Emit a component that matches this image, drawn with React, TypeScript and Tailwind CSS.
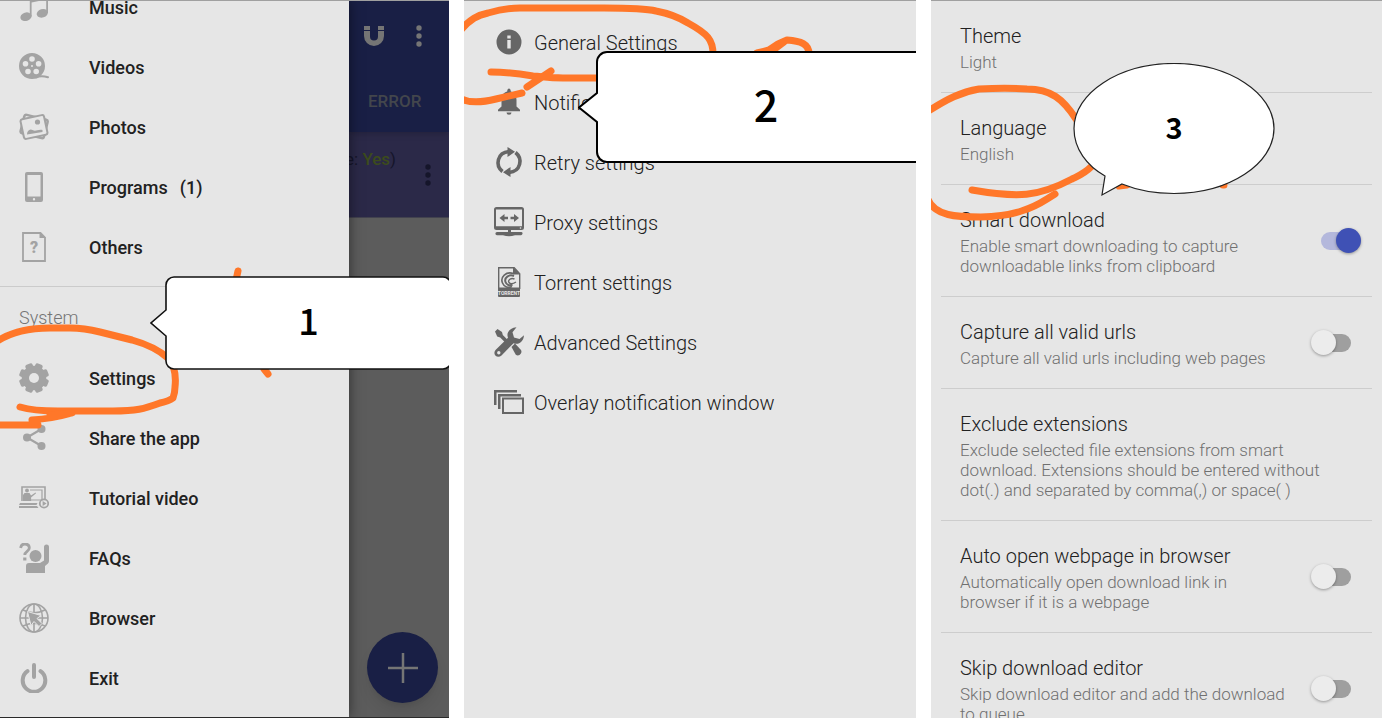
import { useState } from "react"
import type { ReactNode } from "react"

function Icon({ children }: { children: ReactNode }) {
  return (
    <svg viewBox="0 0 30 30" fill="currentColor" aria-hidden="true" className="size-[30px] shrink-0">
      {children}
    </svg>
  )
}

const MusicIcon = () => (
  <Icon>
    <path d="M10.800 3 29 0v21h-1.800V7.500L12.600 10.500v14h-1.800z" />
    <ellipse cx="7" cy="24.700" rx="5.700" ry="4.200" transform="rotate(-18 7 24.700)" />
    <ellipse cx="23.300" cy="21.300" rx="5.700" ry="4.200" transform="rotate(-18 23.300 21.300)" />
  </Icon>
)

const VideosIcon = () => (
  <Icon>
    <path
      fillRule="evenodd"
      d="M13 1a13 13 0 1 0 0 26 13 13 0 0 0 0-26zM13 4.200a2.800 2.800 0 1 1 0 5.600 2.800 2.800 0 0 1 0-5.600zM6.500 8.900a2.800 2.800 0 1 1 0 5.600 2.800 2.800 0 0 1 0-5.600zM19.600 8.900a2.800 2.800 0 1 1 0 5.600 2.800 2.800 0 0 1 0-5.600zM9 16.700a2.800 2.800 0 1 1 0 5.600 2.800 2.800 0 0 1 0-5.600zM17.200 16.700a2.800 2.800 0 1 1 0 5.600 2.800 2.800 0 0 1 0-5.600zM13 13a1 1 0 1 0 0 2 1 1 0 0 0 0-2z"
    />
    <path d="M17 25.500c4-2 8-1.500 12-.2" fill="none" stroke="currentColor" strokeWidth="2" strokeLinecap="round" />
  </Icon>
)

const PhotosIcon = () => (
  <Icon>
    <rect x="3" y="5" width="24" height="19" rx="2" transform="rotate(14 15 15)" fill="none" stroke="currentColor" strokeWidth="2.500" />
    <rect x="3" y="5" width="24" height="20" rx="2" transform="rotate(-12 15 15)" fill="#e6e6e6" stroke="currentColor" strokeWidth="2" />
    <circle cx="18.500" cy="10" r="2.600" />
    <path d="M8 22.500c0-4 3-6.500 6-4.200 3 1.500 5-1.300 9.500-.3v2z" />
  </Icon>
)

const ProgramsIcon = () => (
  <Icon>
    <path
      fillRule="evenodd"
      d="M8 0h14a2 2 0 0 1 2 2v26a2 2 0 0 1-2 2H8a2 2 0 0 1-2-2V2a2 2 0 0 1 2-2zM8.500 3v21.500h13V3zM15 26a1.200 1.200 0 1 0 0 2.400 1.200 1.200 0 0 0 0-2.400z"
    />
  </Icon>
)

const OthersIcon = () => (
  <Icon>
    <path d="M4 1h17.500l4.500 4.500V29H4z" fill="none" stroke="currentColor" strokeWidth="1.800" />
    <path d="M20.500 0v6H27z" />
    <text x="15" y="21" textAnchor="middle" fontSize="16" fontWeight="900" fontFamily="Roboto, sans-serif">
      ?
    </text>
  </Icon>
)

const SettingsIcon = () => (
  <Icon>
    {[22.5, 67.5, 112.5, 157.5].map((angle) => (
      <rect key={angle} x="11.200" y="0" width="7.600" height="30" rx="2" transform={`rotate(${angle} 15 15)`} />
    ))}
    <circle cx="15" cy="15" r="12.300" />
    <circle cx="15" cy="15" r="5" fill="#e6e6e6" />
  </Icon>
)

const ShareIcon = () => (
  <Icon>
    <path d="M22.500 6 8 14.500l14.500 8.500" fill="none" stroke="currentColor" strokeWidth="2.200" />
    <circle cx="22.500" cy="6" r="4" />
    <circle cx="8" cy="14.500" r="4" />
    <circle cx="22.500" cy="23" r="4" />
  </Icon>
)

const TutorialIcon = () => (
  <Icon>
    <path d="M3 18V4h23v13" fill="none" stroke="currentColor" strokeWidth="1.600" />
    <path d="M11 7h12v10H12" fill="none" stroke="currentColor" strokeWidth="1.200" />
    <circle cx="8" cy="7.500" r="1.900" />
    <path d="M4 18v-6l1.500-2h5l1.500 2.500 4.500-3 .6.700-5 4.300V18zM1 20h17.500l-1 2H0zM0 23h18l1.500 2H0z" />
    <circle cx="25" cy="20.500" r="4.200" fill="none" stroke="currentColor" strokeWidth="1.800" />
    <path d="M23.600 18v5l4-2.500z" />
  </Icon>
)

const FaqIcon = () => (
  <Icon>
    <circle cx="16.500" cy="13" r="6" />
    <path d="M7 30v-7a3 3 0 0 1 3-3h11l4-2.500V4a2.500 2.500 0 0 1 5 0v14c0 2-2 3.500-4 5V30z" />
    <path d="M1.700 5C2 2 4 1 5.800 1c3 0 4.500 1.800 4.500 4 0 3.500-4.500 3.300-4.500 7" fill="none" stroke="currentColor" strokeWidth="2.800" />
    <rect x="4.200" y="14.500" width="3.200" height="3" />
  </Icon>
)

const BrowserIcon = () => (
  <Icon>
    <g fill="none" stroke="currentColor" strokeWidth="1.600">
      <circle cx="15" cy="15" r="14" />
      <ellipse cx="15" cy="15" rx="8.500" ry="14" />
      <path d="M15 1v28M1 15h28M4 7c7 3.500 15 3.500 22 0M4 23c7-3.500 15-3.500 22 0" />
    </g>
    <path d="m8.500 8.500 3.500 14 3-4 5 5 3-3-5-5 4-3z" stroke="#e6e6e6" strokeWidth="1" />
  </Icon>
)

const ExitIcon = () => (
  <Icon>
    <g fill="none" stroke="currentColor" strokeWidth="4" strokeLinecap="round">
      <path d="M15 2v12M8.500 8.200a11.300 11.300 0 1 0 13 0" />
    </g>
  </Icon>
)

const InfoIcon = () => (
  <Icon>
    <path
      fillRule="evenodd"
      d="M15 2.500a12.500 12.500 0 1 0 0 25 12.500 12.500 0 0 0 0-25zM13.300 8.500h3.400v3h-3.400zM13.300 13h3.400v8.500h-3.400z"
    />
  </Icon>
)

const BellIcon = () => (
  <Icon>
    <path d="M13.200 4.500c0-4 3.600-4 3.600 0 4 1 5.700 4.500 5.700 8.500v6.500l3.500 3.300v1.400H4v-1.400l3.500-3.300V13c0-4 1.700-7.500 5.700-8.500zM12.500 25.500h5a2.500 2.200 0 0 1-5 0z" />
  </Icon>
)

const RetryIcon = () => (
  <Icon>
    <g fill="none" stroke="currentColor" strokeWidth="3.600">
      <path d="M8.500 24.500C1 18.500 3 5.500 15 4.500" />
      <path d="M21.500 5.500C29 11.500 27 24.500 15 25.500" />
    </g>
    <path d="M13.500 0 21 4.800 13.500 10zM16.500 20 9 25.200l7.500 4.800z" />
  </Icon>
)

const ProxyIcon = () => (
  <Icon>
    <path
      fillRule="evenodd"
      d="M2.500 0h25A2.500 2.500 0 0 1 30 2.500v18a2.500 2.500 0 0 1-2.500 2.500H17v2h10a1.500 1.500 0 0 1 1.500 1.800 2 2 0 0 1-1.500 1.400h-6c-4 1.500-8 1.500-12 0H3a1.500 1.500 0 0 1 0-3.200h11v-2H2.500A2.500 2.500 0 0 1 0 20.500v-18A2.500 2.500 0 0 1 2.500 0zM2 2.500v16.800h26V2.500z"
    />
    <path d="m5.500 11 5-4v2.700H14v2.600h-3.500V15zM25 11l-5-4v2.700h-3.500v2.600H20V15z" />
    <circle cx="26.500" cy="21" r=".8" fill="#e6e6e6" />
  </Icon>
)

const TorrentIcon = () => (
  <Icon>
    <path d="M4.700 22V.700h15.500l5.500 6V22" fill="none" stroke="currentColor" strokeWidth="1.400" />
    <path d="M19 0v7.500h7zM4 20.500h22V29a1 1 0 0 1-1 1H5a1 1 0 0 1-1-1z" />
    <g fill="none" stroke="currentColor">
      <path d="M19.500 6.500C12 4 6 10 8.500 16c1.500 4 6 5.500 9.500 3.500" strokeWidth="1.600" />
      <path d="M20 9c-5-2-10 1.500-8.500 6 1 3 4 4 7 2.500" strokeWidth="2" />
      <path d="M20.500 12c-3.500-1.500-7 1-5.500 3.500 1 1.500 4 1.500 7-.5" strokeWidth="1.400" />
    </g>
    <text x="15" y="27.500" textAnchor="middle" fontSize="5" fontWeight="700" fill="#e6e6e6" fontFamily="Roboto, sans-serif">
      TORRENT
    </text>
  </Icon>
)

const ToolsIcon = () => (
  <Icon>
    <path d="M1 4.500 3.500 2 8 5l.8 3 6 6-2.600 2.600-6-6-3-1z" />
    <path d="m17.500 20 3.500-3.500 6 6.500c1.800 3-2 7-5.200 4.800z" />
    <path
      fillRule="evenodd"
      d="M22.500.3c-7 .5-10.500 5.700-8.500 10.500L1.500 23c-3.500 4.500 2 9 6 5.500l12-12.300c5 2 10-1.200 10.500-8l-4.500 3.800-5.500-1.500-1.500-5.200zM4.800 24a1.700 1.700 0 1 1 0 3.400 1.700 1.700 0 0 1 0-3.400z"
    />
  </Icon>
)

const OverlayIcon = () => (
  <Icon>
    <path d="M0 3h23v2.500H2.500V18H0zM4 7h23v2.500H6.500V22H4z" />
    <rect x="9" y="11.500" width="20" height="14.500" fill="none" stroke="currentColor" strokeWidth="2" />
  </Icon>
)

const MagnetIcon = () => (
  <svg viewBox="0 0 20 20" fill="currentColor" aria-hidden="true" className="size-5">
    <path d="M0 0h6v4H0zM14 0h6v4h-6zM0 5h6v5.500a4 4 0 0 0 8 0V5h6v5a10 10 0 0 1-20 0z" />
  </svg>
)

const DotsIcon = () => (
  <svg viewBox="0 0 6 22" fill="currentColor" aria-hidden="true" className="h-[22px] w-[6px]">
    <circle cx="3" cy="3" r="2.700" />
    <circle cx="3" cy="11" r="2.700" />
    <circle cx="3" cy="19" r="2.700" />
  </svg>
)

const categories = [
  { label: "Music", icon: MusicIcon },
  { label: "Videos", icon: VideosIcon },
  { label: "Photos", icon: PhotosIcon },
  { label: "Programs", icon: ProgramsIcon, count: 1 },
  { label: "Others", icon: OthersIcon },
]

const systemItems = [
  { label: "Settings", icon: SettingsIcon },
  { label: "Share the app", icon: ShareIcon },
  { label: "Tutorial video", icon: TutorialIcon },
  { label: "FAQs", icon: FaqIcon },
  { label: "Browser", icon: BrowserIcon },
  { label: "Exit", icon: ExitIcon },
]

const settingsItems = [
  { label: "General Settings", icon: InfoIcon },
  { label: "Notification", icon: BellIcon },
  { label: "Retry settings", icon: RetryIcon },
  { label: "Proxy settings", icon: ProxyIcon },
  { label: "Torrent settings", icon: TorrentIcon },
  { label: "Advanced Settings", icon: ToolsIcon },
  { label: "Overlay notification window", icon: OverlayIcon },
]

const options = [
  { id: "theme", title: "Theme", text: "Light" },
  { id: "language", title: "Language", text: "English" },
  { id: "smart", title: "Smart download", text: "Enable smart downloading to capture downloadable links from clipboard", toggle: true },
  { id: "capture", title: "Capture all valid urls", text: "Capture all valid urls including web pages", toggle: true },
  {
    id: "exclude",
    title: "Exclude extensions",
    text: "Exclude selected file extensions from smart download. Extensions should be entered without dot(.) and separated by comma(,) or space( )",
  },
  { id: "auto", title: "Auto open webpage in browser", text: "Automatically open download link in browser if it is a webpage", toggle: true },
  { id: "skip", title: "Skip download editor", text: "Skip download editor and add the download to queue", toggle: true },
]

type DrawerItemProps = { label: string; icon: () => ReactNode; count?: number }

function DrawerItem({ label, icon: ItemIcon, count }: DrawerItemProps) {
  return (
    <button type="button" className="flex h-[60px] w-full items-center gap-10 px-[19px] text-left text-[18px] font-medium text-[#212121]">
      <span className="text-[#a3a3a3]">
        <ItemIcon />
      </span>
      <span className="flex gap-3">
        {label}
        {count && <span>({count})</span>}
      </span>
    </button>
  )
}

// Hand-drawn marker strokes over a screen
function Marker({ children }: { children: ReactNode }) {
  return (
    <svg
      viewBox="0 0 452 440"
      fill="none"
      stroke="#ff7729"
      strokeWidth="7"
      strokeLinecap="round"
      strokeLinejoin="round"
      aria-hidden="true"
      className="pointer-events-none absolute top-0 left-0 h-[440px] w-[452px]"
    >
      {children}
    </svg>
  )
}

function DrawerScreen() {
  return (
    <section className="relative flex overflow-hidden border-t border-b border-t-[#a0a0a0] border-b-[#2a2a2a] bg-[#5c5c5c]">
      <nav className="z-10 w-[349px] shrink-0 bg-[#e6e6e6] shadow-[0_0_12px_rgba(0,0,0,0.5)]">
        <div className="-mt-6 border-b border-[#cbcbcb] pb-[9px]">
          {categories.map((item) => (
            <DrawerItem key={item.label} {...item} />
          ))}
        </div>
        <h2 className="flex h-[61px] items-center px-[19px] text-[18px] font-light text-[#757575]">System</h2>
        {systemItems.map((item) => (
          <DrawerItem key={item.label} {...item} />
        ))}
      </nav>

      <div className="min-w-0 flex-1">
        <header className="relative h-[131px] bg-[#191f45] shadow-md">
          <div className="flex h-[70px] items-center justify-between pr-[27px] pl-[15px] text-[#757575]">
            <button type="button" aria-label="Magnet">
              <MagnetIcon />
            </button>
            <button type="button" aria-label="More">
              <DotsIcon />
            </button>
          </div>
          <button type="button" className="flex h-[61px] items-center pl-[19px] text-[17px] font-medium text-[#43464c]">
            ERROR
          </button>
        </header>
        <div className="flex h-[86px] justify-end gap-[29px] border-b border-[#42424e] bg-[#2b2948] pr-[18px] text-[#15152a]">
          <p className="pt-[15px] text-[17px] whitespace-nowrap">
            e: <span className="font-medium text-[#3c4b1c]">Yes</span>)
          </p>
          <button type="button" aria-label="Item menu">
            <DotsIcon />
          </button>
        </div>
      </div>

      <button
        type="button"
        aria-label="Add"
        className="absolute right-[11px] bottom-[14px] flex size-[71px] items-center justify-center rounded-full bg-[#191f45] text-[#757575] shadow-lg"
      >
        <svg viewBox="0 0 30 30" stroke="currentColor" strokeWidth="2.500" aria-hidden="true" className="size-[30px]">
          <path d="M15 0v30M0 15h30" />
        </svg>
      </button>

      <div className="pointer-events-none absolute inset-0 z-20">
        <Marker>
          <path d="M-4 341C12 330 30 327 50 327h20c12 0 22 2 30 4l32 8c18 5 28 11 36 18 8 9 8 20 7 29 0 5-1 8-2 11-4 3-8 4-13 5-16 6-24 8-47 8H58c-18 0-28-1-38-4" />
          <path d="M-4 424h42M32 419c14-1 26-3 40-7l-22 2M238 270l-2 9M264 368l4 5" />
        </Marker>
        <div className="absolute top-[275px] left-[150px] flex h-[94px] w-[301px] items-center justify-center pb-2 pl-4">
          <svg viewBox="0 0 301 94" aria-hidden="true" className="absolute inset-0">
            <path
              d="M24 1h269a8 8 0 0 1 8 8v76a8 8 0 0 1-8 8H24a8 8 0 0 1-8-8V60L1 47l15-13V9a8 8 0 0 1 8-8z"
              fill="#fff"
              stroke="#111"
              strokeWidth="1.600"
            />
          </svg>
          <span className="relative font-['Noto_Sans_CJK_JP',sans-serif] text-[36px] leading-none font-medium text-black">1</span>
        </div>
      </div>
    </section>
  )
}

function SettingsScreen() {
  return (
    <section className="relative overflow-hidden border-t border-[#a0a0a0] bg-[#e6e6e6]">
      <nav className="pt-[11px]">
        {settingsItems.map(({ label, icon: ItemIcon }) => (
          <button
            key={label}
            type="button"
            className="flex h-[60px] w-full items-center gap-[10px] pl-[30px] text-left text-[20px] font-light text-[#212121]"
          >
            <span className="text-[#666]">
              <ItemIcon />
            </span>
            <span className="pt-0.5">{label}</span>
          </button>
        ))}
      </nav>

      <Marker>
        <path d="M-4 30C6 18 14 14 24 12c14-4 22-5 32-5h84c20 0 40 0 52 3 16 3 24 7 32 12 20 11 25 17 25 31" />
        <path d="M27 71c18 0 30 2 42 4 12 1 16 2 30 2h40M-4 97c8 5 20 5 36 1l26-6M63 86l24-16" />
        <path d="m293 52 12-3 9-6 9-4c14 1 22 4 22 14M308 50l12-9" />
      </Marker>
      <div className="pointer-events-none absolute top-[50px] left-[114px] flex h-[112px] w-[357px] items-center justify-center pb-2 pl-[19px]">
        <svg viewBox="0 0 357 112" aria-hidden="true" className="absolute inset-0">
          <path
            d="M29 1h318a10 10 0 0 1 10 10v90a10 10 0 0 1-10 10H29a10 10 0 0 1-10-10V71L1 56.500 19 42V11A10 10 0 0 1 29 1z"
            fill="#fff"
            stroke="#000"
            strokeWidth="2"
          />
        </svg>
        <span className="relative font-['Noto_Sans_CJK_JP',sans-serif] text-[43px] leading-none font-medium text-black">2</span>
      </div>
    </section>
  )
}

function OptionsScreen() {
  const [enabled, setEnabled] = useState<Record<string, boolean>>({ smart: true })

  return (
    <section className="relative overflow-hidden border-t border-[#a0a0a0] bg-[#e6e6e6] px-[10px]">
      {options.map((option) => (
        <div key={option.id} className="flex items-center gap-[22px] border-b border-[#cdcdcd] pr-[11px] pl-[19px]">
          <label htmlFor={option.toggle ? option.id : undefined} className="min-w-0 flex-1 pt-[19px] pb-[20px] font-light">
            <span className="block text-[20px] leading-[32px] text-[#212121]">{option.title}</span>
            <span className="block text-[17px] leading-[20px] text-[#707070]">{option.text}</span>
          </label>
          {option.toggle && (
            <input
              id={option.id}
              type="checkbox"
              role="switch"
              checked={!!enabled[option.id]}
              onChange={(e) => setEnabled({ ...enabled, [option.id]: e.target.checked })}
              className="relative h-[25px] w-[50px] shrink-0 appearance-none before:absolute before:top-[4px] before:left-[5px] before:h-[18px] before:w-[35px] before:rounded-full before:bg-[#9f9f9f] after:absolute after:top-0 after:left-0 after:size-[25px] after:rounded-full after:bg-[#ececec] after:shadow-[0_1px_3px_rgba(0,0,0,0.35)] checked:before:left-[10px] checked:before:bg-[#b4b8dc] checked:after:left-[25px] checked:after:bg-[#3f51b5]"
            />
          )}
        </div>
      ))}

      <Marker>
        <path d="M-4 111c20-13 34-20 52-23 18-1 34-1 48 0 24 0 36 10 49 30 16 24 26 36 16 47-8 8-14 10-20 13-34 18-54 19-100 11" />
        <path d="M-4 196c6 20 32 20 54 20 34-1 52-9 66-18l8-5M188 185l8-1M292 184h1" />
      </Marker>
      <div className="pointer-events-none absolute top-[62px] left-[142px] flex h-[131px] w-[202px] items-center justify-center pb-1">
        <svg viewBox="0 0 202 134" aria-hidden="true" className="absolute top-0 left-0 h-[134px] w-[202px]">
          <path
            d="M32 113C14 103 1 86 1 65.500 1 30 46 .500 101 .500s100 29.500 100 65-45 65-100 65c-19 0-36-3-52-9.500L29 132z"
            fill="#fff"
            stroke="#222"
            strokeWidth="1.200"
          />
        </svg>
        <span className="relative font-['Noto_Sans_CJK_JP',sans-serif] text-[29px] leading-none font-bold text-black">3</span>
      </div>
    </section>
  )
}

export default function App() {
  return (
    <main className="grid h-screen grid-cols-[449fr_452fr_451fr] gap-[15px] overflow-hidden bg-white font-[Roboto,sans-serif]">
      <DrawerScreen />
      <SettingsScreen />
      <OptionsScreen />
    </main>
  )
}
